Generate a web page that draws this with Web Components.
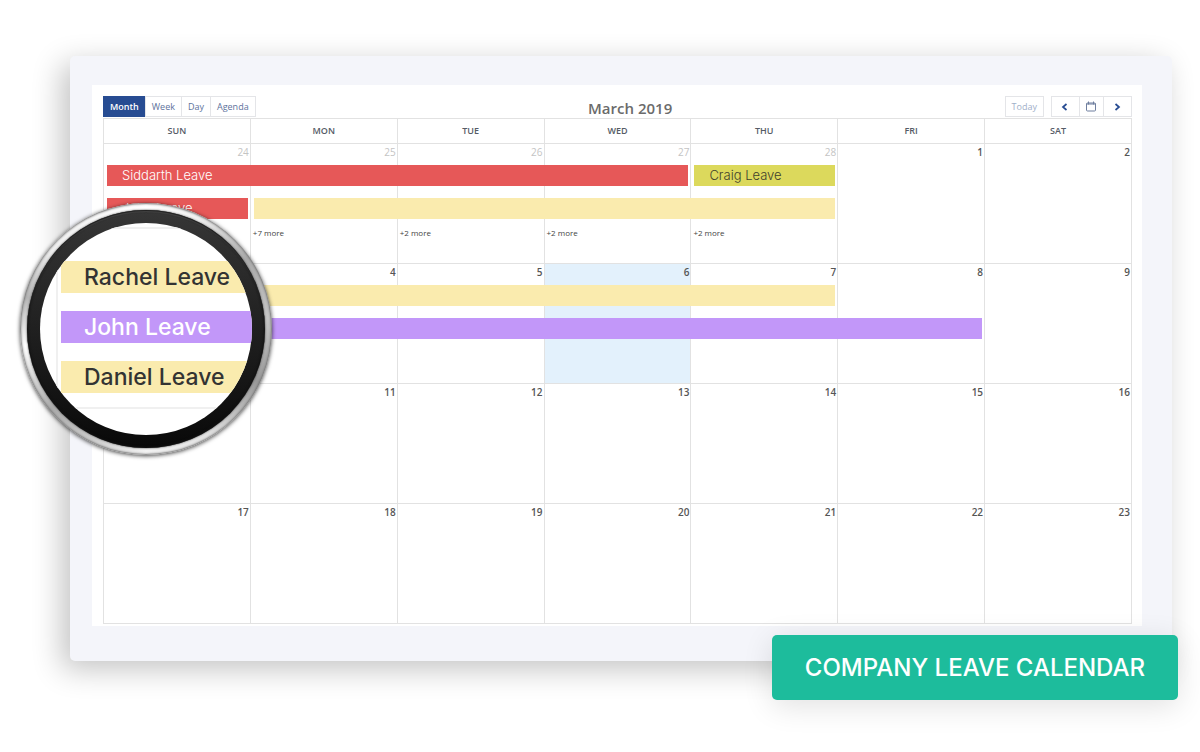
<!DOCTYPE html>
<html lang="en">
<head>
<meta charset="utf-8">
<title>Company Leave Calendar</title>
<style>
  * { box-sizing: border-box; }
  body {
    margin: 0;
    min-height: 100vh;
    padding: 56px 28px 52px 70px;
    background: #fff;
    font-family: "Open Sans", "Noto Sans", sans-serif;
  }
</style>
</head>
<body>
<calendar-frame>
  <leave-calendar></leave-calendar>
  <magnifier-lens slot="lens">
    <lens-row kind="yellow">Rachel Leave</lens-row>
    <lens-row kind="purple">John Leave</lens-row>
    <lens-row kind="yellow">Daniel Leave</lens-row>
  </magnifier-lens>
  <caption-button slot="caption">COMPANY LEAVE CALENDAR</caption-button>
</calendar-frame>

<script>
// Outer card, with slots for what lies over it
class CalendarFrame extends HTMLElement {
  constructor() {
    super();
    this.attachShadow({ mode: "open" });
  }
  connectedCallback() {
    this.shadowRoot.innerHTML = `
      <style>
        :host {
          display: block;
          position: relative;
          box-sizing: border-box;
          padding: 29px 30px 35px 22px;
          background: #f4f5fa;
          border-radius: 5px;
          box-shadow: -8px 8px 30px rgba(0, 0, 0, .24);
        }
        .lens { position: absolute; left: -50px; top: 147px; }
        .caption { position: absolute; right: -6px; bottom: -39px; }
      </style>
      <slot></slot>
      <div class="lens"><slot name="lens"></slot></div>
      <div class="caption"><slot name="caption"></slot></div>
    `;
  }
}
customElements.define("calendar-frame", CalendarFrame);

// Month / Week / Day / Agenda, title and paging buttons
class CalendarToolbar extends HTMLElement {
  constructor() {
    super();
    this.attachShadow({ mode: "open" });
  }
  connectedCallback() {
    this.shadowRoot.innerHTML = `
      <style>
        :host {
          display: flex;
          justify-content: space-between;
          align-items: flex-start;
          height: 22px;
        }
        .group { display: flex; }
        .right { display: flex; gap: 7px; }
        button {
          box-sizing: border-box;
          height: 21px;
          padding: 0 6px;
          margin: 0 0 0 -1px;
          border: 1px solid #e4e5e8;
          background: #fff;
          color: #5d729c;
          font: 9px/19px "Open Sans", sans-serif;
        }
        button:first-child { margin-left: 0; }
        button.active { background: #274c92; border-color: #274c92; color: #fff; font-weight: 600; }
        .today { color: #9fb0c9; }
        .icon { display: flex; align-items: center; justify-content: center; width: 29px; padding: 0; }
        .icon.mid { width: 25px; }
        h1 { margin: 0; padding-top: 2px; font-size: 15px; line-height: 20px; font-weight: 600; color: #6b6b6b; }
        svg { display: block; fill: none; stroke: #274c92; }
      </style>
      <div class="group">
        <button class="active">Month</button>
        <button>Week</button>
        <button>Day</button>
        <button>Agenda</button>
      </div>
      <h1>${this.getAttribute("label")}</h1>
      <div class="right">
        <button class="today">Today</button>
        <div class="group">
          <button class="icon" aria-label="Previous">
            <svg width="8" height="8" viewBox="0 0 8 8" stroke-width="1.7"><path d="M5.5 1 2 4 5.5 7"/></svg>
          </button>
          <button class="icon mid" aria-label="Pick a date">
            <svg width="12" height="11" viewBox="0 0 12 11" style="stroke:#6f7f9f"><rect x="1.5" y="2" width="9" height="8" rx="1"/><path d="M1.5 3h9M3.5 0.5v3M8.5 0.5v3"/></svg>
          </button>
          <button class="icon" aria-label="Next">
            <svg width="8" height="8" viewBox="0 0 8 8" stroke-width="1.7"><path d="M2.5 1 6 4 2.5 7"/></svg>
          </button>
        </div>
      </div>
    `;
  }
}
customElements.define("calendar-toolbar", CalendarToolbar);

// One bar; span is the number of days that it covers
class LeaveEvent extends HTMLElement {
  constructor() {
    super();
    this.attachShadow({ mode: "open" });
  }
  connectedCallback() {
    this.shadowRoot.innerHTML = `
      <style>
        :host {
          display: block;
          position: relative;
          box-sizing: border-box;
          width: calc((100% + 1px) * ${this.getAttribute("span") || 1} - 6px);
          height: 21px;
          margin: 0 0 12px 3px;
          padding-left: 15px;
          font: 300 13px/21px Inter, sans-serif;
          color: #fff;
        }
        :host([kind="red"]) { background: #e65858; }
        :host([kind="olive"]) { background: #dcd95c; color: #3f3f2c; }
        :host([kind="yellow"]) { background: #faebae; }
        :host([kind="purple"]) { background: #c297f9; }
        :host([kind="none"]) { visibility: hidden; }
      </style>
      <slot></slot>
    `;
  }
}
customElements.define("leave-event", LeaveEvent);

class LeaveCalendar extends HTMLElement {
  constructor() {
    super();
    this.attachShadow({ mode: "open" });
    this.days = ["SUN", "MON", "TUE", "WED", "THU", "FRI", "SAT"];
    this.weeks = [
      [24, 25, 26, 27, 28, 1, 2],
      [3, 4, 5, 6, 7, 8, 9],
      [10, 11, 12, 13, 14, 15, 16],
      [17, 18, 19, 20, 21, 22, 23]
    ];
    // keyed by "week-weekday"
    this.events = {
      "0-0": [["red", 4, "Siddarth Leave"], ["red", 1, "John Leave"]],
      "0-1": [["none", 1, ""], ["yellow", 4, ""]],
      "0-4": [["olive", 1, "Craig Leave"]],
      "1-0": [["yellow", 5, ""], ["purple", 6, ""]]
    };
    this.more = { "0-1": 7, "0-2": 2, "0-3": 2, "0-4": 2 };
  }

  connectedCallback() {
    this.render();
  }

  cell(week, day) {
    const key = week + "-" + day;
    const classes = [];
    if (week === 0 && day < 5) classes.push("off");
    if (key === "1-3") classes.push("today");
    const bars = (this.events[key] || []).map(([kind, span, text]) =>
      `<leave-event kind="${kind}" span="${span}">${text}</leave-event>`).join("");
    const more = this.more[key] ? `<a href="#">+${this.more[key]} more</a>` : "";
    return `<td class="${classes.join(" ")}"><div class="cell">
      <span class="date">${this.weeks[week][day]}</span>
      <div class="bars">${bars}</div>${more}
    </div></td>`;
  }

  render() {
    this.shadowRoot.innerHTML = `
      <style>
        :host {
          display: block;
          box-sizing: border-box;
          padding: 11px 10px 2px 11px;
          background: #fff;
        }
        table {
          width: 100%;
          table-layout: fixed;
          border-spacing: 0;
          border-right: 1px solid #e2e2e2;
          border-bottom: 1px solid #e2e2e2;
        }
        th, td { padding: 0; border-left: 1px solid #e2e2e2; border-top: 1px solid #e2e2e2; }
        th { height: 24px; font-size: 9px; line-height: 24px; font-weight: 600; color: #555b66; }
        td { vertical-align: top; }
        .cell { height: 119px; display: flex; flex-direction: column; }
        .date {
          height: 21px;
          padding-right: 1px;
          text-align: right;
          font-size: 10px;
          line-height: 16px;
          font-weight: 600;
          color: #555;
        }
        .off .date { color: #c4c4c4; font-weight: 400; }
        .today { background: #e3f1fc; }
        .bars { height: 60px; }
        a { padding-left: 2px; font-size: 8px; line-height: 16px; color: #444; text-decoration: none; }
      </style>
      <calendar-toolbar label="March 2019"></calendar-toolbar>
      <table>
        <thead><tr>${this.days.map(d => `<th scope="col">${d}</th>`).join("")}</tr></thead>
        <tbody>
          ${this.weeks.map((w, i) => `<tr>${w.map((d, j) => this.cell(i, j)).join("")}</tr>`).join("")}
        </tbody>
      </table>
    `;
  }
}
customElements.define("leave-calendar", LeaveCalendar);

// Enlarged bar inside the lens
class LensRow extends HTMLElement {
  constructor() {
    super();
    this.attachShadow({ mode: "open" });
  }
  connectedCallback() {
    this.shadowRoot.innerHTML = `
      <style>
        :host {
          display: block;
          height: 32px;
          margin-left: 3px;
          padding-left: 23px;
          background: #faebae;
          color: #333;
          font: 500 23px/32px Inter, sans-serif;
          white-space: nowrap;
        }
        :host([kind="purple"]) { background: #c297f9; color: #fff; }
      </style>
      <slot></slot>
    `;
  }
}
customElements.define("lens-row", LensRow);

class MagnifierLens extends HTMLElement {
  constructor() {
    super();
    this.attachShadow({ mode: "open" });
  }
  connectedCallback() {
    this.shadowRoot.innerHTML = `
      <style>
        :host { display: block; width: 252px; }
        div { box-sizing: border-box; }
        .rim {
          padding: 7px;
          border-radius: 50%;
          background: conic-gradient(#fff 0deg, #f0f0f0 25deg, #aaa 55deg, #c5c5c5 85deg, #999 115deg, #e2e2e2 150deg, #f2f2f2 180deg, #c5c5c5 210deg, #aaa 230deg, #fff 262deg, #b5b5b5 285deg, #eee 310deg, #fff 360deg);
          box-shadow: inset 0 0 2px 1px #777, 0 1px 4px rgba(0, 0, 0, .75);
        }
        .ring {
          padding: 13px;
          border-radius: 50%;
          background: linear-gradient(#363636, #202020 50%, #090909);
          box-shadow: 0 0 2px #222, inset 0 0 2px 1px #111, inset 0 2px 1px #555;
        }
        .glass { height: 212px; border-radius: 50%; overflow: hidden; background: #fff; }
        .page {
          display: flex;
          flex-direction: column;
          gap: 18px;
          height: 182px;
          margin: 4px 0 0 16px;
          padding-top: 32px;
          box-sizing: border-box;
          border: 2px solid #f0f0f0;
          border-right: 0;
        }
      </style>
      <div class="rim"><div class="ring"><div class="glass">
        <div class="page"><slot></slot></div>
      </div></div></div>
    `;
  }
}
customElements.define("magnifier-lens", MagnifierLens);

class CaptionButton extends HTMLElement {
  constructor() {
    super();
    this.attachShadow({ mode: "open" });
  }
  connectedCallback() {
    this.shadowRoot.innerHTML = `
      <style>
        :host { display: block; }
        button {
          display: block;
          min-width: 406px;
          height: 65px;
          padding: 0 30px;
          border: 0;
          border-radius: 5px;
          background: #1dbc9c;
          color: #fff;
          font: 500 24px/65px Inter, sans-serif;
          white-space: nowrap;
          box-shadow: 0 6px 30px rgba(0, 0, 0, .12);
        }
      </style>
      <button><slot></slot></button>
    `;
  }
}
customElements.define("caption-button", CaptionButton);
</script>
</body>
</html>
